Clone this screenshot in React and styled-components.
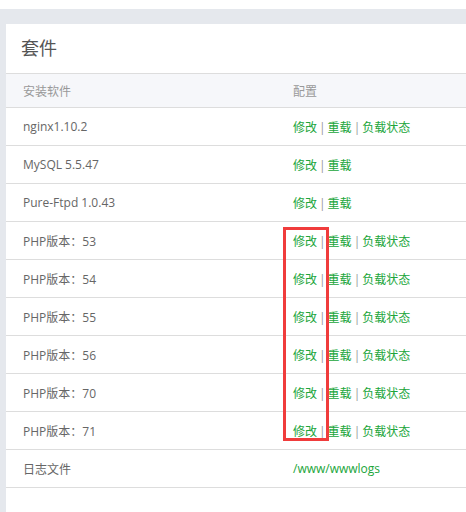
import React from 'react'
import styled, { createGlobalStyle } from 'styled-components'

const GlobalStyle = createGlobalStyle`
  html, body {
    margin: 0;
    padding: 0;
    background: #fff;
    overflow: hidden;
  }
  body {
    font-family: "Open Sans", "Noto Sans CJK SC", sans-serif;
    font-size: 12px;
    color: #666;
  }
`

const softList = [
  { name: 'nginx1.10.2', actions: ['修改', '重载', '负载状态'] },
  { name: 'MySQL 5.5.47', actions: ['修改', '重载'] },
  { name: 'Pure-Ftpd 1.0.43', actions: ['修改', '重载'] },
  { name: 'PHP版本：53', actions: ['修改', '重载', '负载状态'] },
  { name: 'PHP版本：54', actions: ['修改', '重载', '负载状态'] },
  { name: 'PHP版本：55', actions: ['修改', '重载', '负载状态'] },
  { name: 'PHP版本：56', actions: ['修改', '重载', '负载状态'] },
  { name: 'PHP版本：70', actions: ['修改', '重载', '负载状态'] },
  { name: 'PHP版本：71', actions: ['修改', '重载', '负载状态'] },
]

const App = () => {
  const html = (
    <>
      <GlobalStyle />
      <StyledPage>
        <StyledPanel>
          <StyledTitle>套件</StyledTitle>
          <StyledHead>
            <span>安装软件</span>
            <span>配置</span>
          </StyledHead>
          {softList.map(item => (
            <StyledRow key={item.name}>
              <span>{item.name}</span>
              <span>
                {item.actions.map((a, i) => (
                  <React.Fragment key={a}>
                    {i > 0 && <StyledSep>|</StyledSep>}
                    <StyledLink>{a}</StyledLink>
                  </React.Fragment>
                ))}
              </span>
            </StyledRow>
          ))}
          <StyledRow>
            <span>日志文件</span>
            <StyledLink>/www/wwwlogs</StyledLink>
          </StyledRow>
          {/* 标注框 */}
          <StyledMark />
        </StyledPanel>
      </StyledPage>
    </>
  )
  return html
}

export default App

const StyledPage = styled.div`
  margin-top: 9px;
  height: calc(100vh - 9px);
  background: #e5e8ed;
  padding: 15px 0 0 6px;
  box-sizing: border-box;
`

const StyledPanel = styled.div`
  position: relative;
  background: #fff;
  height: 100%;
`

const StyledTitle = styled.div`
  height: 49px;
  line-height: 48px;
  padding-left: 15px;
  font-size: 18px;
  color: #555;
  border-bottom: 1px solid #ddd;
`

const StyledHead = styled.div`
  display: grid;
  grid-template-columns: 270px 1fr;
  height: 33px;
  align-items: center;
  padding-left: 17px;
  background: #f6f7fa;
  color: #999;
  border-bottom: 1px solid #ddd;
`

const StyledRow = styled.div`
  display: grid;
  grid-template-columns: 270px 1fr;
  height: 37px;
  align-items: center;
  padding-left: 17px;
  color: #666;
  border-bottom: 1px solid #ddd;
`

const StyledLink = styled.span`
  color: #20a53a;
`

const StyledSep = styled.span`
  color: #999;
  margin: 0 2px;
`

const StyledMark = styled.div`
  position: absolute;
  left: 277px;
  top: 203px;
  width: 46px;
  height: 214px;
  box-sizing: border-box;
  border: 3px solid #f03c3c;
`
